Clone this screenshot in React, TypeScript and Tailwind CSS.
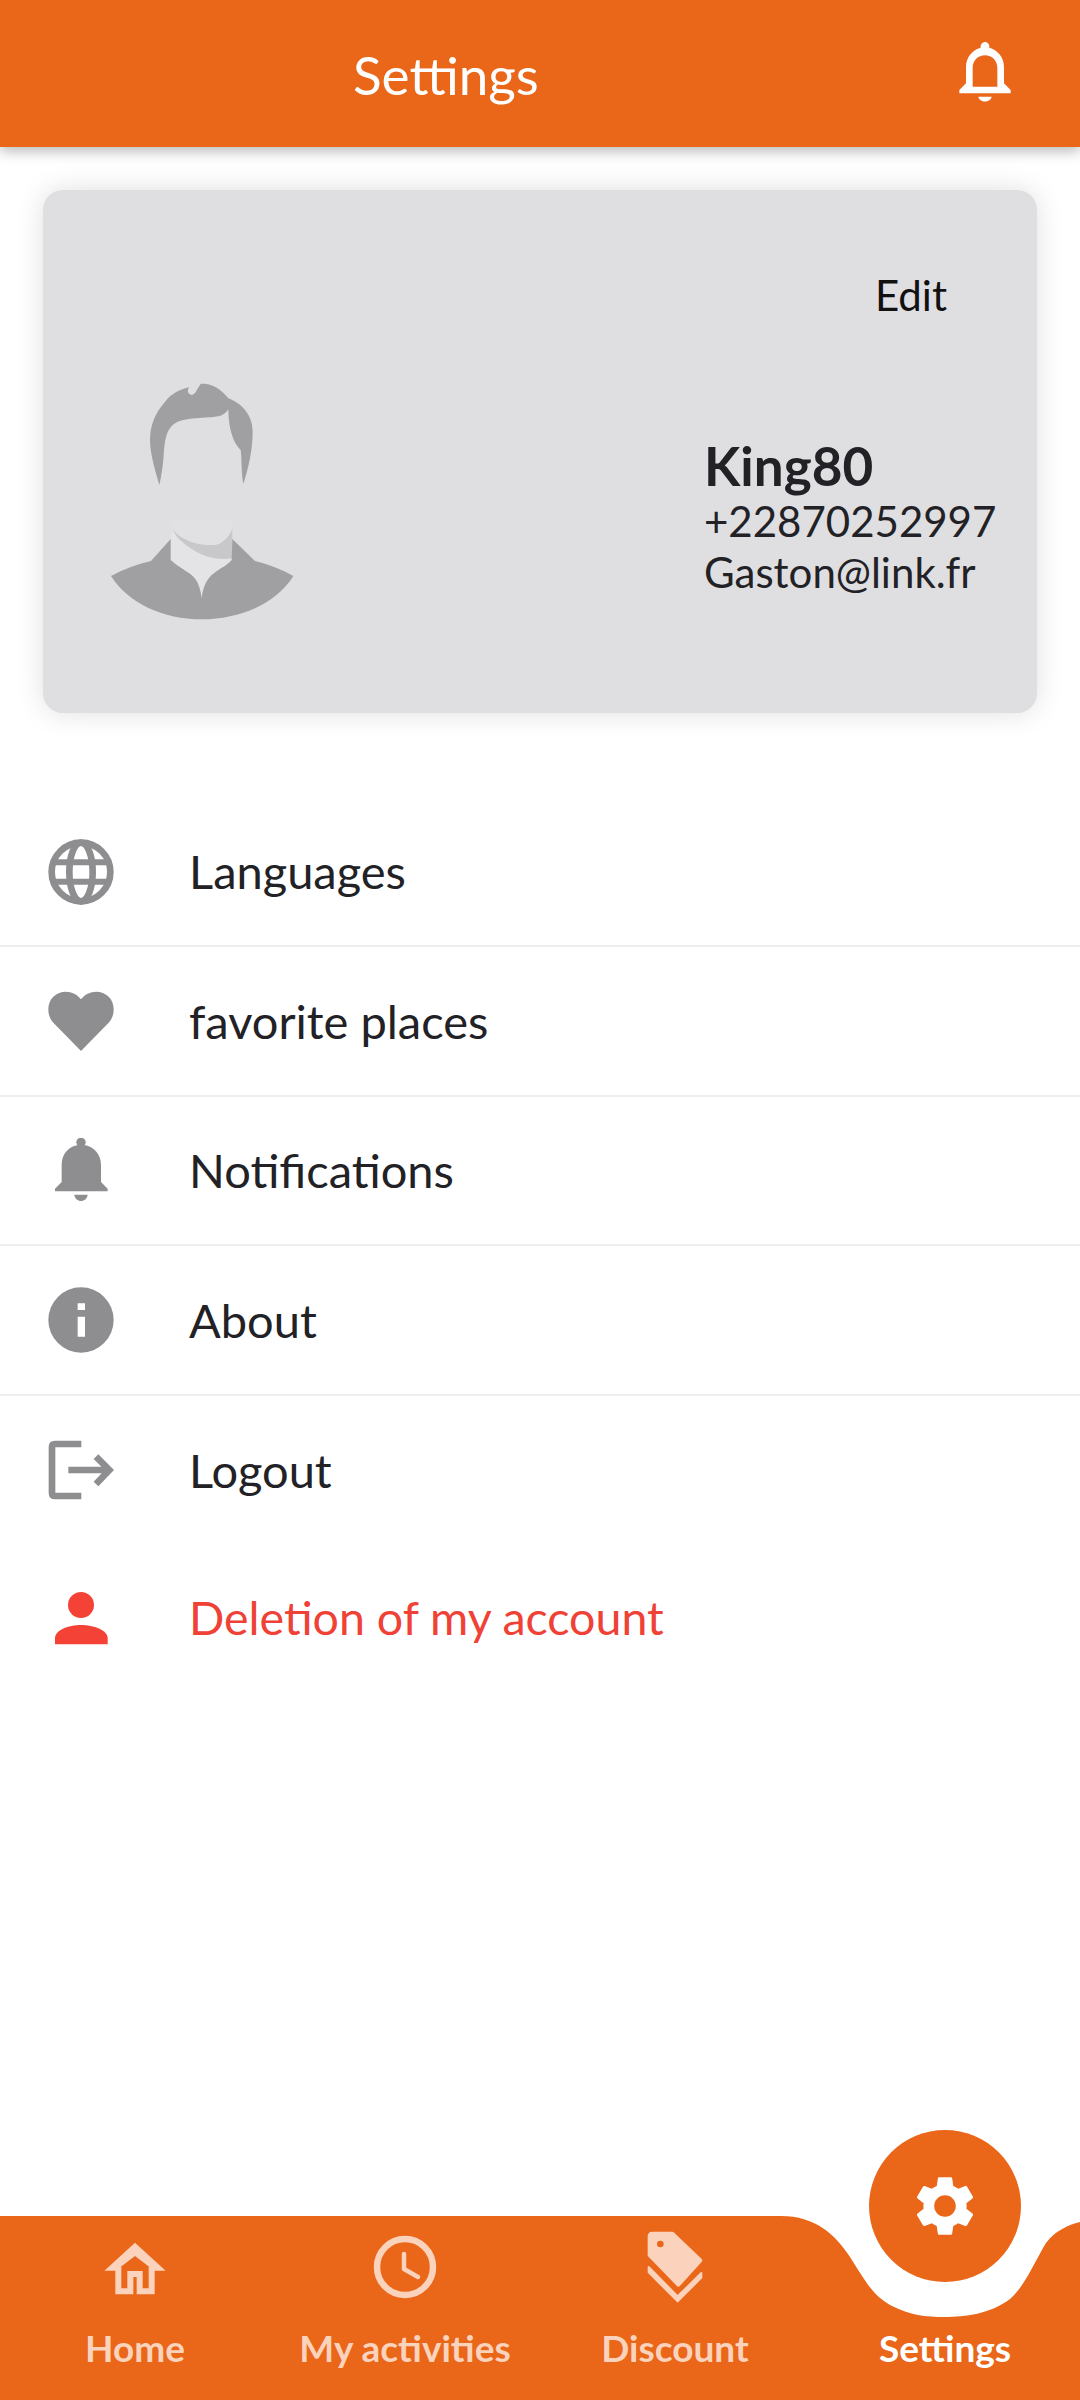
import React from 'react';
import { MdSettings } from 'react-icons/md';

const HeaderBell: React.FC = () => (
  <svg width="70" height="80" viewBox="0 0 210 240" fill="#fff">
    <path
      fillRule="evenodd"
      d="M105 24C113 24 119 31 118 41C142 48 162 68 162 100V148L182 168V178H28V168L48 148V100C48 68 68 48 92 41C91 31 97 24 105 24ZM105 64C84 64 68 80 68 102V158H142V102C142 80 126 64 105 64Z"
    />
    <path d="M85 188H125C122 207 88 207 85 188Z" />
  </svg>
);

const Avatar: React.FC = () => (
  <svg width="240" height="270" viewBox="0 0 720 810" className="shrink-0">
    <path fill="#e4e3e5" d="M272 537L277 505H457V600L375 665L365 715L340 650L272 600Z" />
    <path
      fill="#c8c7ca"
      d="M277 505C300 540 350 556 400 555C425 553 445 535 457 505V595C420 600 380 595 340 570C310 552 285 530 277 505Z"
    />
    <path fill="#e1e0e3" d="M277 480H457V505C445 535 425 553 400 555C350 556 300 540 277 505Z" />
    <path
      fill="#a09fa2"
      d="M93 648C130 628 170 613 213 603L272 537V600C300 625 325 635 340 650C355 665 362 690 365 715C368 690 375 665 395 645C415 628 440 618 455 600L457 537L525 603C565 613 605 628 640 648C590 730 480 778 365 778C250 778 145 730 93 648Z"
    />
    <path
      fill="#a09fa2"
      d="M238 375C225 330 210 280 210 240C210 195 225 160 255 125C275 100 300 88 328 82C322 90 320 100 335 105C348 102 352 85 362 72C395 68 425 90 445 115C485 130 518 165 518 215C518 270 505 325 490 372C483 335 486 295 482 270C460 250 445 205 445 148C435 165 420 170 390 172C350 175 310 175 285 190C262 205 255 235 252 270C250 310 245 345 238 375Z"
    />
  </svg>
);

const GlobeIcon: React.FC = () => (
  <svg width="66" height="66" viewBox="84 86 198 198" fill="none" stroke="#8e8d90">
    <circle cx="183" cy="185" r="88" strokeWidth="20" />
    <ellipse cx="183" cy="185" rx="35" ry="88" strokeWidth="20" />
    <path d="M100 156H266M100 214H266" strokeWidth="18" />
  </svg>
);

const HeartIcon: React.FC = () => (
  <svg width="66" height="66" viewBox="84 536 198 198" fill="#8e8d90">
    <path d="M183 725L100 640C80 620 80 580 100 562C125 538 165 545 183 570C201 545 241 538 266 562C286 580 286 620 266 640Z" />
  </svg>
);

const BellIcon: React.FC = () => (
  <svg width="66" height="66" viewBox="84 990 198 198" fill="#8e8d90">
    <circle cx="183" cy="1003" r="14" />
    <path d="M183 1010C150 1010 125 1035 125 1070V1122L105 1142V1150H263V1142L243 1122V1070C243 1035 216 1010 183 1010Z" />
    <path d="M163 1160H203C200 1185 166 1185 163 1160Z" />
  </svg>
);

const InfoIcon: React.FC = () => (
  <svg width="66" height="66" viewBox="84 233 198 198">
    <circle cx="183" cy="332" r="98" fill="#8e8d90" />
    <path fill="#fff" d="M173 282H195V302H173ZM173 322H195V382H173Z" />
  </svg>
);

const LogoutIcon: React.FC = () => (
  <svg width="66" height="66" viewBox="84 679 198 198" fill="none" stroke="#8e8d90" strokeWidth="20">
    <path d="M184 700H105Q96 700 96 709V847Q96 856 105 856H184" />
    <path d="M145 778H262M228 738L268 778L228 820" />
  </svg>
);

const PersonIcon: React.FC = () => (
  <svg width="66" height="66" viewBox="84 1120 198 198" fill="#f44336">
    <circle cx="183" cy="1180" r="39" />
    <path d="M105 1298V1280C105 1255 145 1240 183 1240C221 1240 263 1255 263 1280V1298Z" />
  </svg>
);

const HomeIcon: React.FC = () => (
  <svg width="80" height="70" viewBox="0 0 240 210" fill="#fbd2bb">
    <path d="M120 32L212 116H178L120 72L62 116H28Z" />
    <path d="M70 105V178H106V126H134V178H170V105" fill="none" stroke="#fbd2bb" strokeWidth="18" />
  </svg>
);

const ClockIcon: React.FC = () => (
  <svg width="64" height="64" viewBox="0 0 64 64" fill="none" stroke="#fbd2bb">
    <circle cx="32" cy="32" r="28" strokeWidth="6.5" />
    <path d="M31 19V34L45 42" strokeWidth="4.5" strokeLinecap="round" strokeLinejoin="round" />
  </svg>
);

const TagIcon: React.FC = () => (
  <svg width="80" height="85" viewBox="0 0 240 255" fill="#fbd2bb" stroke="#fbd2bb" strokeWidth="12" strokeLinejoin="round">
    <path d="M44 34Q44 26 52 26H112L196 106L130 179L44 90Z" />
    <circle cx="76" cy="57" r="10" fill="#ea6619" stroke="none" />
    <path d="M41 126L128 214L199 144V158L128 229L41 142Z" strokeWidth="6" />
  </svg>
);

const rows = [
  { label: 'Languages', icon: <GlobeIcon />, h: 'h-[149px]' },
  { label: 'favorite places', icon: <HeartIcon />, h: 'h-[150px]' },
  { label: 'Notifications', icon: <BellIcon />, h: 'h-[149px]' },
  { label: 'About', icon: <InfoIcon />, h: 'h-[150px]' },
];

const tabs = [
  { label: 'Home', icon: <HomeIcon /> },
  { label: 'My activities', icon: <ClockIcon /> },
  { label: 'Discount', icon: <TagIcon /> },
];

export default function App() {
  return (
    <div className="relative flex h-[2400px] w-[1080px] flex-col overflow-hidden bg-white font-[family-name:Lato,sans-serif] text-[#222226]">
      <header className="relative z-10 flex h-[147px] shrink-0 items-center justify-between bg-[#ea6619] pl-[353px] pr-[60px] shadow-[0_5px_12px_rgba(0,0,0,0.25)]">
        <h1 className="pt-[2px] text-[53px] leading-none text-white">Settings</h1>
        <HeaderBell />
      </header>

      <main className="flex-1">
        <section className="mx-[43px] mt-[43px] h-[523px] rounded-[20px] bg-[#dfdee1] pl-[37px] pt-[82px] shadow-[0_0_28px_rgba(0,0,0,0.13)]">
          <div className="flex justify-end pr-[90px]">
            <span className="text-[42px] leading-[46px] text-[#111]">Edit</span>
          </div>
          <div className="mt-[42px] flex">
            <Avatar />
            <div className="ml-[384px] pt-[77px]">
              <div className="mb-[1px] text-[53px] font-bold leading-[58px]">King80</div>
              <div className="text-[42px] leading-[51px]">+22870252997</div>
              <div className="text-[42px] leading-[51px]">Gaston@link.fr</div>
            </div>
          </div>
        </section>

        <ul className="mt-[85px]">
          {rows.map(row => (
            <li key={row.label} className={`flex items-center gap-[75px] border-b-2 border-[#eeeef0] pl-[48px] ${row.h}`}>
              {row.icon}
              <span className="text-[47px]">{row.label}</span>
            </li>
          ))}
          <li className="flex h-[148px] items-center gap-[75px] pl-[48px]">
            <LogoutIcon />
            <span className="text-[47px]">Logout</span>
          </li>
          <li className="flex h-[147px] items-center gap-[75px] pl-[48px]">
            <PersonIcon />
            <span className="text-[46.5px] text-[#ef4136]">Deletion of my account</span>
          </li>
        </ul>
      </main>

      <footer className="relative h-[184px] shrink-0">
        <svg className="absolute inset-0" width="1080" height="184" viewBox="0 0 1080 184" fill="#ea6619">
          <path d="M0 0H781C815 0 835 18 850 41C866 66 873 80 892 90C910 99 925 101 945 101C965 101 990 98 1010 83C1025 70 1035 45 1046 27C1055 15 1068 9 1080 6V184H0Z" />
        </svg>
        <nav className="relative grid h-full grid-cols-4">
          {tabs.map(tab => (
            <div key={tab.label} className="flex flex-col items-center">
              <div className="flex h-[102px] items-center">{tab.icon}</div>
              <span className="mt-[6px] text-[37px] font-bold leading-[48px] text-[#fbd2bb]">{tab.label}</span>
            </div>
          ))}
          <div className="flex flex-col items-center pt-[108px]">
            <span className="text-[37px] font-bold leading-[48px] text-white">Settings</span>
          </div>
        </nav>
        <button className="absolute left-[869px] top-[-86px] flex h-[152px] w-[152px] items-center justify-center rounded-full bg-[#ea6619]">
          <MdSettings size={72} color="#fff" />
        </button>
      </footer>
    </div>
  );
}
